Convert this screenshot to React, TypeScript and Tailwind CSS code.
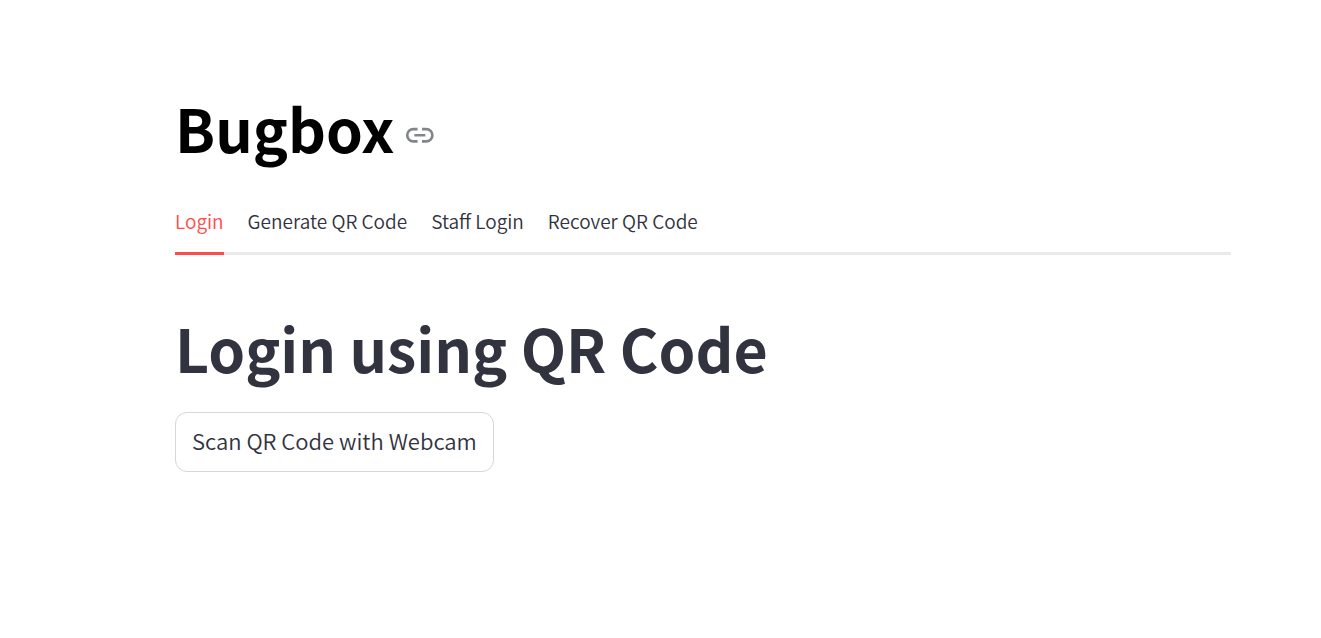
import { useState } from "react";

const tabs = ["Login", "Generate QR Code", "Staff Login", "Recover QR Code"];

export default function App() {
  const [active, setActive] = useState("Login");
  return (
    <main className="min-h-screen bg-white pt-[83px] pr-[90px] pl-[175px] font-['Noto_Sans_CJK_SC',sans-serif] font-[350] text-[#31333f]">
      <header className="flex items-center gap-[10px]">
        <h1 className="text-[59px] leading-[90px] font-bold text-black">Bugbox</h1>
        <a href="#bugbox" aria-label="Link to heading" className="pt-[14px] text-[#83858c]">
          <svg width="32" height="32" viewBox="0 0 24 24" fill="none" stroke="currentColor" strokeWidth="2">
            <path d="M10.200 7.600H7a4.600 4.600 0 0 0 0 9.200H10.200M13.500 7.600h3.200a4.600 4.600 0 0 1 0 9.200H13.500M7.800 12.200h8.200" />
          </svg>
        </a>
      </header>
      <div role="tablist" className="mt-[17px] flex gap-6 border-b-[3px] border-[#eaeaeb]">
        {tabs.map((tab) => (
          <button
            key={tab}
            role="tab"
            aria-selected={tab === active}
            onClick={() => setActive(tab)}
            className={
              tab === active
                ? "-mb-[3px] h-[65px] border-b-[3px] border-[#ff4b4b] text-[19px] text-[#ff4b4b]"
                : "-mb-[3px] h-[65px] border-b-[3px] border-transparent text-[19px]"
            }
          >
            {tab}
          </button>
        ))}
      </div>
      <section className="pt-12">
        <h2 className="text-[59px] leading-[90px] font-bold">Login using QR Code</h2>
        <button className="mt-[19px] h-[60px] rounded-xl border border-[#d6d6d8] px-4 pb-[3px] text-[22px]">
          Scan QR Code with Webcam
        </button>
      </section>
    </main>
  );
}
